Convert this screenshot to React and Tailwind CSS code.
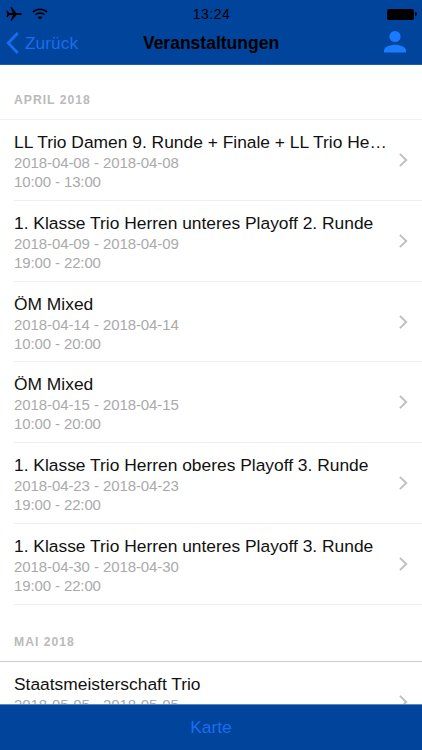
const sections = [
  {
    title: 'APRIL 2018',
    heading: 'h-[55px] pb-[12px] border-[#f0f0f0]',
    events: [
      { name: 'LL Trio Damen 9. Runde + Finale + LL Trio Herren 9. Runde', date: '2018-04-08 - 2018-04-08', time: '10:00 - 13:00' },
      { name: '1. Klasse Trio Herren unteres Playoff 2. Runde', date: '2018-04-09 - 2018-04-09', time: '19:00 - 22:00' },
      { name: 'ÖM Mixed', date: '2018-04-14 - 2018-04-14', time: '10:00 - 20:00' },
      { name: 'ÖM Mixed', date: '2018-04-15 - 2018-04-15', time: '10:00 - 20:00' },
      { name: '1. Klasse Trio Herren oberes Playoff 3. Runde', date: '2018-04-23 - 2018-04-23', time: '19:00 - 22:00' },
      { name: '1. Klasse Trio Herren unteres Playoff 3. Runde', date: '2018-04-30 - 2018-04-30', time: '19:00 - 22:00' },
    ],
  },
  {
    title: 'MAI 2018',
    heading: 'h-[57px] pb-[12px] border-[#cccccc]',
    events: [{ name: 'Staatsmeisterschaft Trio', date: '2018-05-05 - 2018-05-05', time: '10:00 - 20:00' }],
  },
]

function StatusBar() {
  return (
    <div className="grid h-[27px] grid-cols-3 items-center pt-px pr-[5px] pl-[6px] text-black">
      <div className="flex items-center gap-[10px]">
        <svg width="16" height="14" viewBox="0 0 16 14" fill="currentColor">
          <path d="M16 7c0-.7-.8-1.1-1.8-1.1h-3.9L5.8.2H4.5l2.2 5.7H3.3L1.4 3.8H.4L1.2 7l-.8 3.2h1l1.9-2.1h3.4l-2.2 5.7h1.3l4.5-5.7h3.9c1 0 1.8-.4 1.8-1.1z" />
        </svg>
        <svg width="16" height="12" viewBox="0 0 16 12" fill="none" stroke="currentColor" strokeWidth="1.4">
          <path d="M.8 4.2a10.3 10.3 0 0 1 14.4 0" />
          <path d="M3.4 6.8a6.6 6.6 0 0 1 9.2 0" />
          <path d="M8 11.6 5.7 9.3a3.3 3.3 0 0 1 4.6 0z" fill="currentColor" stroke="none" />
        </svg>
      </div>
      <div className="text-center text-[14px] leading-none tracking-[0.5px]">13:24</div>
      <div className="flex items-center justify-end gap-px">
        <div className="h-[11px] w-[27px] rounded-[2px] bg-black" />
        <div className="h-1 w-[2px] rounded-r-full bg-black" />
      </div>
    </div>
  )
}

function NavBar() {
  return (
    <div className="grid h-[37px] grid-cols-[1fr_auto_1fr] pr-[15px] pl-[6px]">
      <div className="flex items-start gap-[5px] text-[#1a6df0]">
        <svg className="mt-[5px]" width="14" height="22" viewBox="0 0 14 22" fill="none" stroke="currentColor" strokeWidth="2.8">
          <path d="M11.8 1 2.2 11l9.6 10" />
        </svg>
        <span className="pt-[8px] text-[17.2px] leading-[17px] tracking-[0.1px]">Zurück</span>
      </div>
      <h1 className="pt-[8px] pl-[9px] text-[17.5px] leading-[17px] font-bold text-black">Veranstaltungen</h1>
      <div className="flex items-start justify-end pt-[3px] text-[#1a7bff]">
        <svg width="24" height="24" viewBox="0 0 24 24" fill="currentColor">
          <circle cx="12" cy="6.5" r="5.6" />
          <path d="M1 22.6v-2c0-3.7 5.5-5.9 11-5.9s11 2.2 11 5.9v2z" />
        </svg>
      </div>
    </div>
  )
}

function EventRow({ event }) {
  return (
    <li className="flex h-[80.8px] pl-[14px]">
      <div className="flex min-w-0 flex-1 border-b border-[#eeeeee] pr-[14px]">
        <div className="min-w-0 flex-1 pt-[12px]">
          <p className="truncate text-[17.4px] leading-[21px] text-[#111111]">{event.name}</p>
          <p className="text-[15px] leading-[19px] tracking-[-0.09px] text-[#aaaaaa]">{event.date}</p>
          <p className="text-[15px] leading-[19px] tracking-[-0.12px] text-[#aaaaaa]">{event.time}</p>
        </div>
        <svg className="mt-[33px] ml-[8px] shrink-0" width="10" height="14" viewBox="0 0 10 14" fill="none" stroke="#c0c0c4" strokeWidth="2">
          <path d="M1.9.9 8.2 7l-6.3 6.1" />
        </svg>
      </div>
    </li>
  )
}

export default function App() {
  return (
    <div className="flex h-[750px] w-[422px] flex-col overflow-hidden bg-white font-['Liberation_Sans',Arial,sans-serif]">
      <header className="h-[65px] shrink-0 border-b border-[#1f5ba8] bg-[#00449b]">
        <StatusBar />
        <NavBar />
      </header>

      <main className="min-h-0 flex-1 overflow-hidden">
        {sections.map((section) => (
          <section key={section.title}>
            <h2 className={`flex items-end border-b pl-[14px] text-[12.2px] leading-[14px] font-bold tracking-[1px] text-[#bababa] ${section.heading}`}>
              {section.title}
            </h2>
            <ul>
              {section.events.map((event) => (
                <EventRow key={event.date} event={event} />
              ))}
            </ul>
          </section>
        ))}
      </main>

      <footer className="flex h-[46px] shrink-0 items-center justify-center border-t border-[#5f8ac0] bg-[#00449b] text-[17.4px] text-[#1a6df0]">
        Karte
      </footer>
    </div>
  )
}
